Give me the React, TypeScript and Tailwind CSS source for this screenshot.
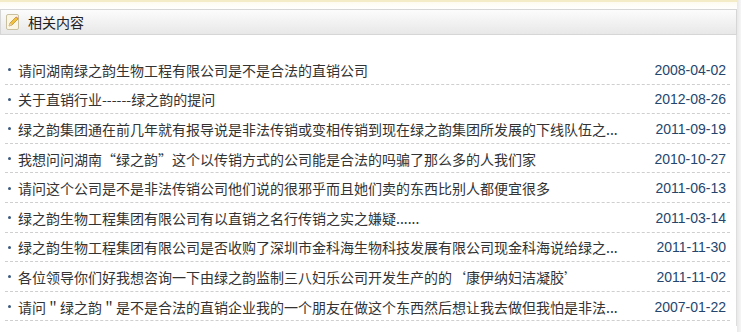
const items = [
  { title: '请问湖南绿之韵生物工程有限公司是不是合法的直销公司', date: '2008-04-02' },
  { title: '关于直销行业------绿之韵的提问', date: '2012-08-26' },
  { title: '绿之韵集团通在前几年就有报导说是非法传销或变相传销到现在绿之韵集团所发展的下线队伍之...', date: '2011-09-19' },
  { title: '我想问问湖南“绿之韵”这个以传销方式的公司能是合法的吗骗了那么多的人我们家', date: '2010-10-27' },
  { title: '请问这个公司是不是非法传销公司他们说的很邪乎而且她们卖的东西比别人都便宜很多', date: '2011-06-13' },
  { title: '绿之韵生物工程集团有限公司有以直销之名行传销之实之嫌疑......', date: '2011-03-14' },
  { title: '绿之韵生物工程集团有限公司是否收购了深圳市金科海生物科技发展有限公司现金科海说给绿之...', date: '2011-11-30' },
  { title: '各位领导你们好我想咨询一下由绿之韵监制三八妇乐公司开发生产的的‘康伊纳妇洁凝胶’', date: '2011-11-02' },
  { title: '请问＂绿之韵＂是不是合法的直销企业我的一个朋友在做这个东西然后想让我去做但我怕是非法...', date: '2007-01-22' },
];

const PencilIcon = () => (
  <svg width="14" height="16" viewBox="0 0 14 16" className="shrink-0">
    <rect x="0.5" y="0.5" width="12" height="15" rx="1.5" fill="#fbf6e4" stroke="#c9c0a0" />
    <path d="M3 12 L4 9 L10 3 L12 5 L6 11 Z" fill="#f2c23a" stroke="#b8872a" strokeWidth="0.7" />
    <path d="M3 12 L4 9 L6 11 Z" fill="#e9d3a8" />
    <path d="M10 3 L12 5 L12.6 4.4 L10.6 2.4 Z" fill="#e0808a" />
  </svg>
);

export default function App() {
  return (
    <div className="flex h-[332px] w-[741px] overflow-hidden bg-white font-['Liberation_Sans','Noto_Sans_CJK_SC',sans-serif]">
      <div className="flex w-[737px] flex-col">
        <div className="h-[2px] bg-[#f3ecc6]" />
        <div className="h-[7px] bg-gradient-to-b from-[#fdfbf0] to-white" />
        <div className="flex h-[26px] items-center gap-[8px] border border-[#d6d6d6] bg-gradient-to-b from-[#fdfcfd] to-[#e8e8e8] pl-[5px]">
          <PencilIcon />
          <span className="text-[14px] text-[#222] font-['Noto_Sans_CJK_SC',sans-serif]">相关内容</span>
        </div>
        <div className="flex flex-col border-r border-[#dedede] pt-[20px] pb-[5px] pl-[5px] pr-[6px]">
          {items.map((it) => (
            <div
              key={it.date + it.title}
              className="flex h-[29.6px] items-center justify-between border-b border-dashed border-[#cfcfcf] pt-[1px]"
            >
              <div className="flex items-center gap-[7px] pl-[3px]">
                <span className="h-[3px] w-[3px] rounded-full bg-[#3b5a80]" />
                <span className="text-[14px] leading-none text-[#333] font-['Noto_Sans_CJK_SC',sans-serif]">{it.title}</span>
              </div>
              <span className="pr-[4px] text-[14px] leading-none text-[#24466e]">{it.date}</span>
            </div>
          ))}
        </div>
      </div>
      <div className="w-[4px] bg-gradient-to-r from-[#e8e8e8] to-[#f6f6f6]" />
    </div>
  );
}
